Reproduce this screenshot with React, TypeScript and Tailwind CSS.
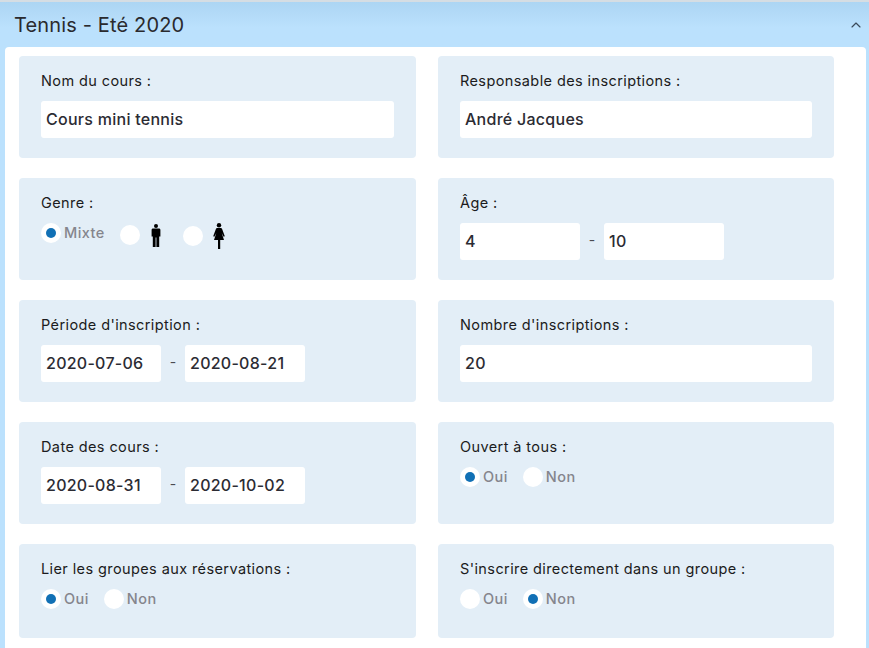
import React from 'react';
import { ChevronUp } from 'lucide-react';

const Field = ({ value, wide }: { value: string; wide?: boolean }) => (
  <div className={`h-[37px] ${wide ? 'w-full' : 'w-[120px]'} bg-white rounded-[3px] pl-[5px] pb-[2px] flex items-center text-base font-medium text-[#2b2b33] tracking-[0.27px]`}>
    {value}
  </div>
);

const Radio = ({ checked, label, icon }: { checked?: boolean; label?: string; icon?: React.ReactNode }) => (
  <div className="flex items-center">
    <span className="w-5 h-5 rounded-full bg-white flex items-center justify-center shrink-0">
      {checked && <span className="w-2.5 h-2.5 rounded-full bg-[#1170b5]" />}
    </span>
    {label && <span className="ml-[3px] -mt-[1px] text-[14.5px] font-medium text-[#85858c] tracking-[0.45px]">{label}</span>}
    {icon}
  </div>
);

const Range = ({ from, to }: { from: string; to: string }) => (
  <div className="flex items-center">
    <Field value={from} />
    <span className="w-6 text-center text-sm text-[#4a4a50] -mt-1">-</span>
    <Field value={to} />
  </div>
);

const Card = ({ label, short, children }: { label: string; short?: boolean; children: React.ReactNode }) => (
  <div className={`${short ? 'h-[94px]' : 'h-[102px]'} bg-[#e3eef7] rounded-[4px] px-[22px] pt-[15px]`}>
    <div className="h-5 mb-[10px] text-[14.5px] leading-5 text-[#1b1b20] tracking-[0.4px]">{label}</div>
    {children}
  </div>
);

const YesNo = ({ yes }: { yes: boolean }) => (
  <div className="flex items-center gap-[15px]">
    <Radio checked={yes} label="Oui" />
    <Radio checked={!yes} label="Non" />
  </div>
);

const Man = () => (
  <svg width="10" height="23" viewBox="0 0 10 23" className="ml-[11px] mt-[1px] self-start" fill="#000">
    <circle cx="5" cy="2" r="2" />
    <path d="M2 4.6h6c.8 0 1.4.6 1.4 1.4v6.6H8.2V23H5.4v-9.6h-.8V23H1.8V12.6H.6V6c0-.8.6-1.4 1.4-1.4z" />
  </svg>
);

const Woman = () => (
  <svg width="12" height="26" viewBox="0 0 12 26" className="ml-[10px] self-start" fill="#000">
    <circle cx="6" cy="2.2" r="2.2" />
    <path d="M4.2 5h3.6c.6 0 1 .3 1.2.8l2.8 7.4-1.2.6-1.9-3.9 2.3 7H7.2V26H5v-9.1H1l2.3-7-1.9 3.9-1.2-.6L3 5.8c.2-.5.6-.8 1.2-.8z" />
  </svg>
);

export default function App() {
  return (
    <div className="w-[869px] h-[648px] overflow-hidden font-['Inter',sans-serif] pl-[5px] pr-[3px] border-t-2 border-[#d5dde3] bg-gradient-to-b from-[#acd5f3] to-[#bbe1fd] to-[4%]">
      <div className="h-[45px] flex items-center justify-between pl-[9px] pr-[2px]">
        <h1 className="text-xl mt-[1px] text-[#2a2a2e] tracking-[0.15px]">Tennis - Eté 2020</h1>
        <ChevronUp size={16} strokeWidth={1.75} className="text-[#3a4a5a]" />
      </div>
      <div className="h-[601px] bg-white rounded-t-[4px] pl-[14px] pt-[9px]">
        <div className="grid grid-cols-[397px_396px] gap-x-[22px] gap-y-5">
          <Card label="Nom du cours :"><Field wide value="Cours mini tennis" /></Card>
          <Card label="Responsable des inscriptions :"><Field wide value="André Jacques" /></Card>

          <Card label="Genre :">
            <div className="flex items-start h-6">
              <Radio checked label="Mixte" />
              <div className="ml-[15px]"><Radio icon={<Man />} /></div>
              <div className="ml-[22px]"><Radio icon={<Woman />} /></div>
            </div>
          </Card>
          <Card label="Âge :"><Range from="4" to="10" /></Card>

          <Card label="Période d'inscription :"><Range from="2020-07-06" to="2020-08-21" /></Card>
          <Card label="Nombre d'inscriptions :"><Field wide value="20" /></Card>

          <Card label="Date des cours :"><Range from="2020-08-31" to="2020-10-02" /></Card>
          <Card label="Ouvert à tous :"><YesNo yes /></Card>

          <Card short label="Lier les groupes aux réservations :"><YesNo yes /></Card>
          <Card short label="S'inscrire directement dans un groupe :"><YesNo yes={false} /></Card>
        </div>
      </div>
    </div>
  );
}
